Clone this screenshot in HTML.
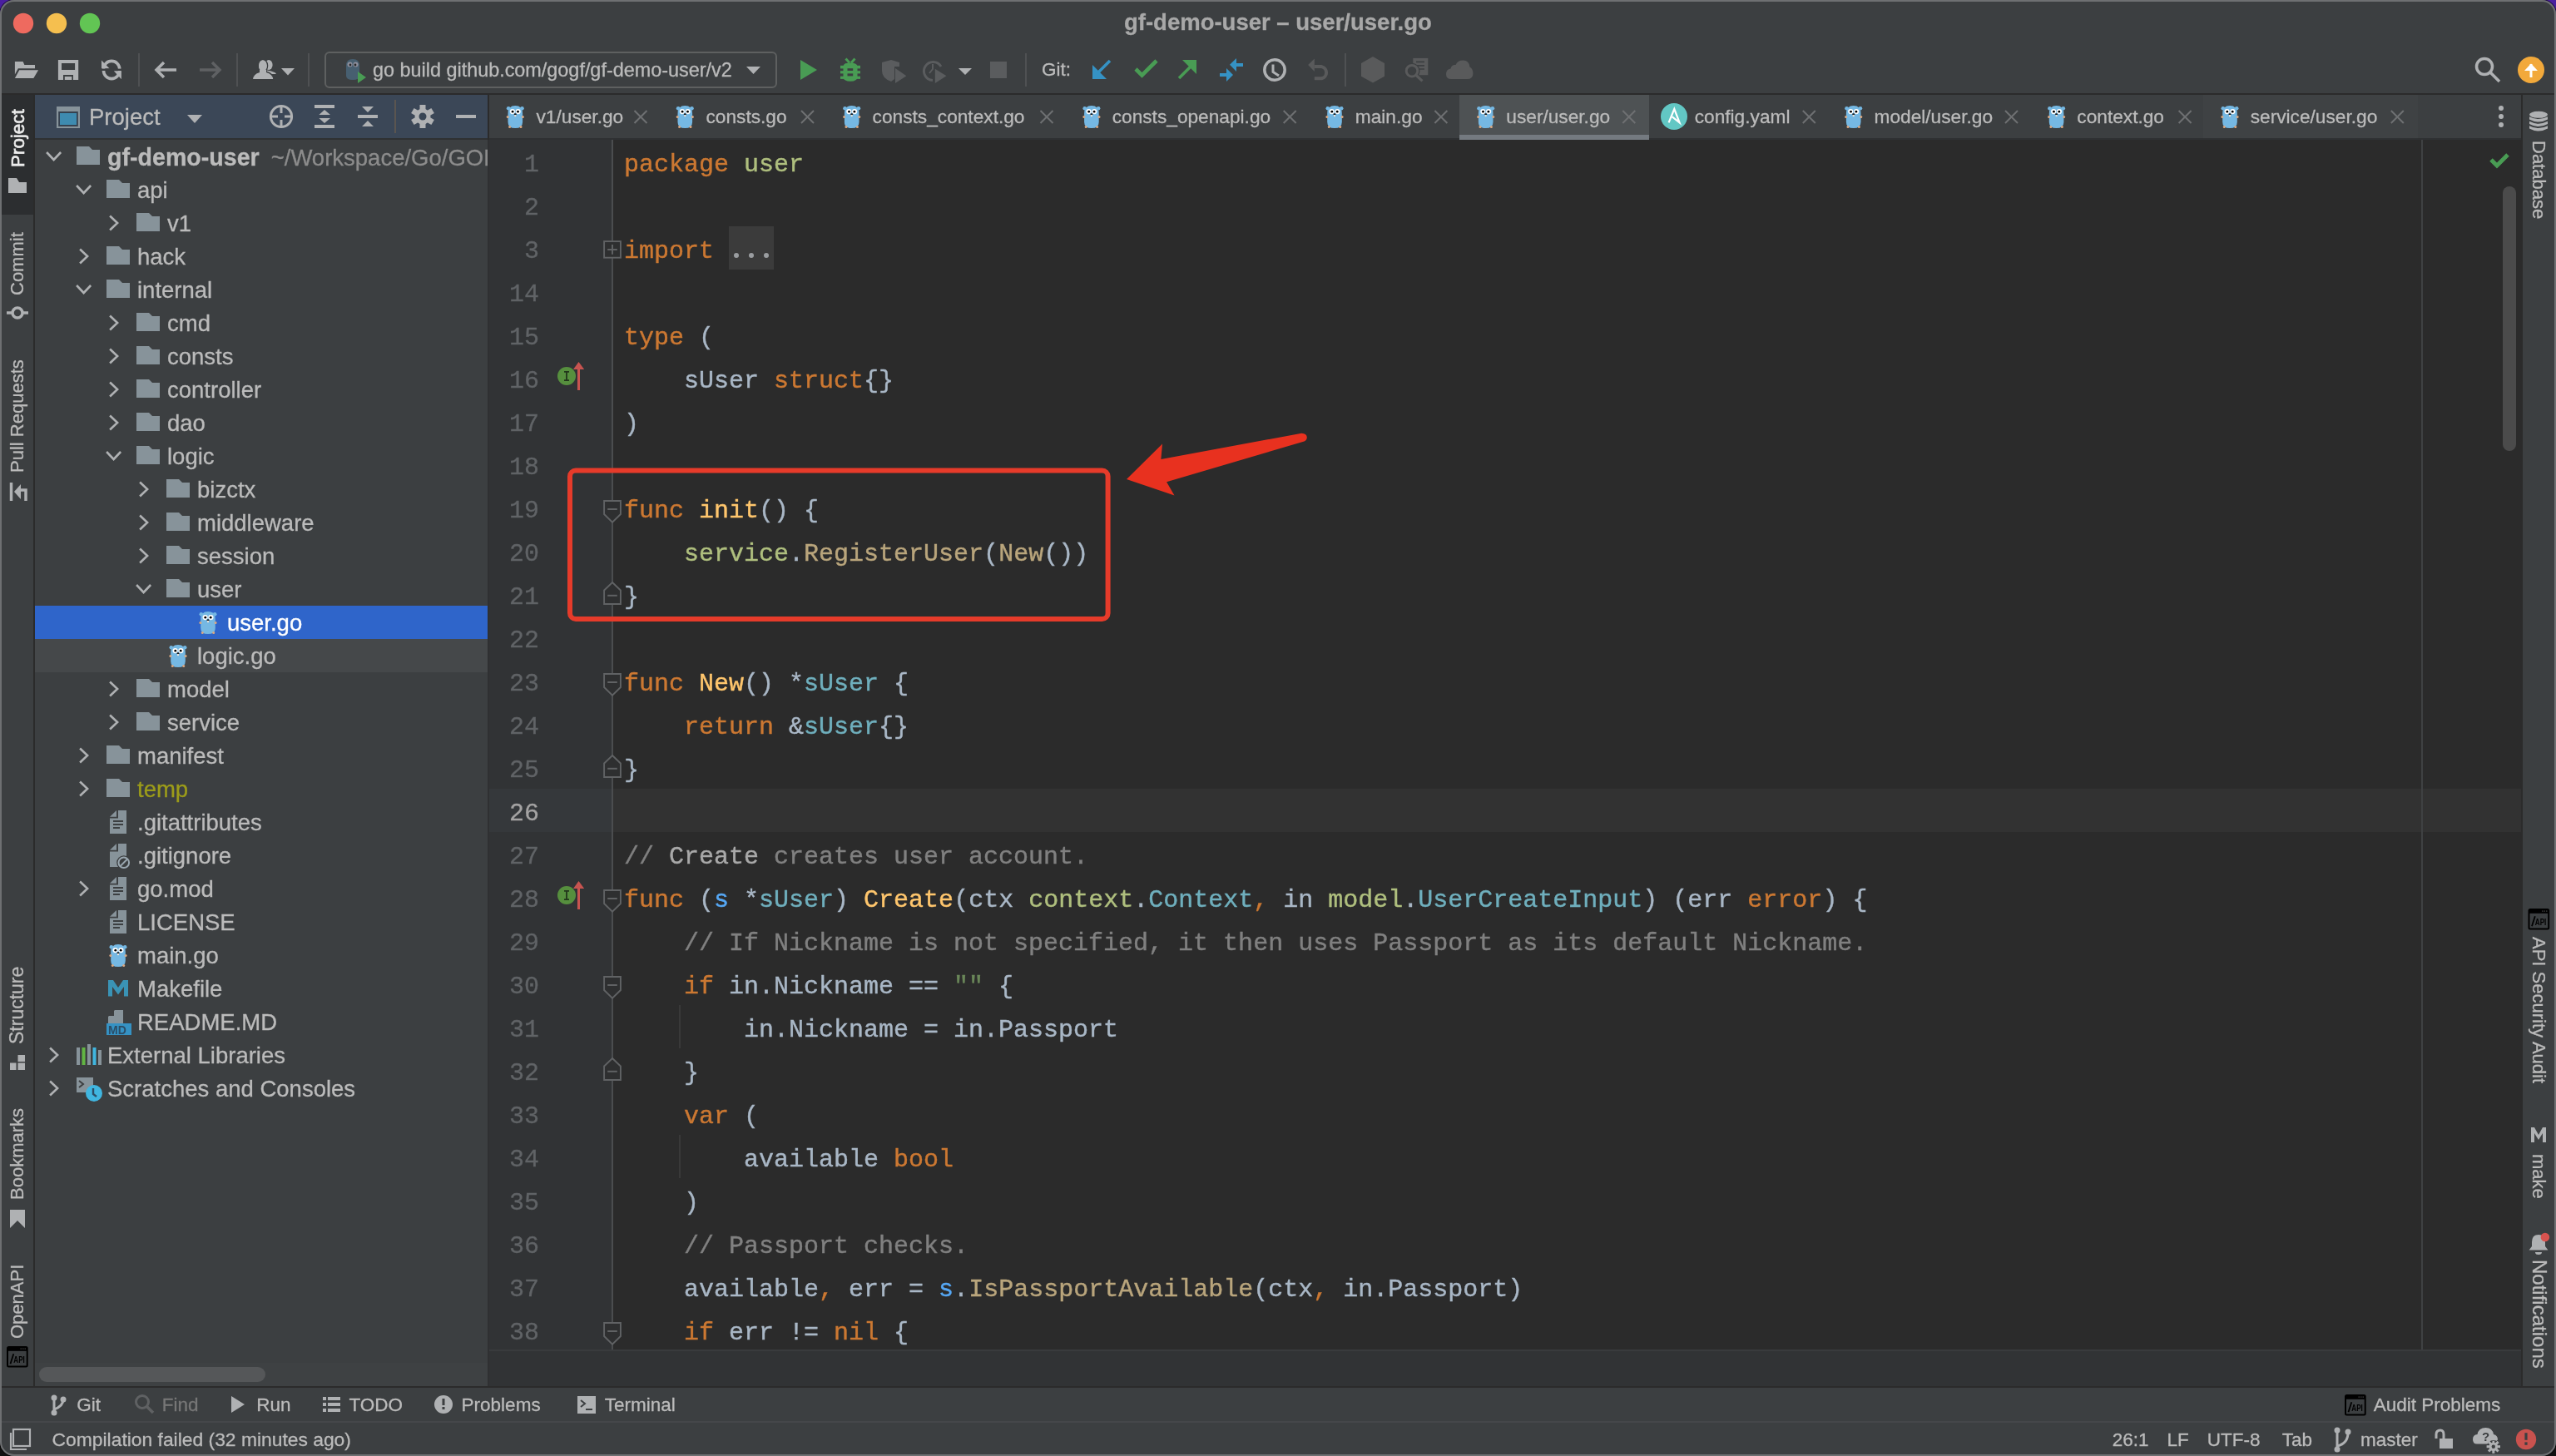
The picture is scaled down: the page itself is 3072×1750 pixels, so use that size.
<!DOCTYPE html>
<html><head><meta charset="utf-8">
<style>
*{margin:0;padding:0;box-sizing:border-box}
html,body{width:3072px;height:1750px;overflow:hidden}
body{position:relative;background:linear-gradient(#4a1fa0 0,#4a1fa0 50%,#111 50%,#111 100%);font-family:"Liberation Sans",sans-serif}
.a{position:absolute}
#win{position:absolute;left:0;top:0;width:3072px;height:1750px;border-radius:17px;background:#3c3f41;overflow:hidden;will-change:transform}
#frame{position:absolute;left:0;top:0;width:3072px;height:1750px;border-radius:17px;border:2px solid #6e7072;box-shadow:0 0 0 1px rgba(0,0,0,0.6)}
.ui{position:absolute;font-family:"Liberation Sans",sans-serif;color:#bbbbbb;white-space:nowrap;-webkit-text-stroke:0.3px currentColor}
.ln{position:absolute;left:588px;width:60px;-webkit-text-stroke:0.3px currentColor;text-align:right;font-family:"Liberation Mono",monospace;font-size:30px;line-height:52px;height:52px;color:#606366}
.cl{position:absolute;left:750px;-webkit-text-stroke:0.4px currentColor;font-family:"Liberation Mono",monospace;font-size:30px;line-height:52px;height:52px;color:#a9b7c6;white-space:pre}
.k{color:#cc7832}.f{color:#ffc66d}.c{color:#b9a57c}.p{color:#afbf7e}.t{color:#6fafbd}.r{color:#56a8f5}.cm{color:#808080}.s{color:#6a8759}.dr{color:#a9a9a9}
.tree{position:absolute;font-size:27.5px;line-height:40px;height:40px;color:#bbbbbb;white-space:nowrap;-webkit-text-stroke:0.3px currentColor}
.tab{position:absolute;font-size:22.5px;line-height:53px;color:#bbbbbb;white-space:nowrap}

</style></head><body>
<div id="win">
<!-- toolbar separator -->
<div class="a" style="left:0;top:112px;width:3072px;height:2px;background:#2b2b2b"></div>
<!-- left strip -->
<div class="a" style="left:0;top:114px;width:40px;height:1552px;background:#3c3f41"></div>
<div class="a" style="left:0;top:114px;width:40px;height:144px;background:#2c2e30"></div>
<div class="a" style="left:40px;top:114px;width:2px;height:1552px;background:#2b2b2b"></div>
<!-- project panel -->
<div class="a" style="left:42px;top:114px;width:544px;height:52px;background:#3b4757"></div>
<div class="a" style="left:42px;top:166px;width:544px;height:2px;background:#2f3133"></div>
<div class="a" style="left:586px;top:114px;width:2px;height:54px;background:#2b2b2b"></div>
<div class="a" style="left:586px;top:168px;width:2px;height:1498px;background:#2f3032"></div>
<div class="a" style="left:42px;top:1638px;width:544px;height:28px;background:#3e4143"></div>
<!-- tab bar -->
<div class="a" style="left:588px;top:114px;width:2442px;height:52px;background:#3c3f41"></div>
<div class="a" style="left:588px;top:166px;width:2442px;height:2px;background:#2f3133"></div>
<!-- editor -->
<div class="a" style="left:588px;top:168px;width:2442px;height:1454px;background:#2b2b2b"></div>
<div class="a" style="left:588px;top:168px;width:148px;height:1454px;background:#313335"></div>
<div class="a" style="left:588px;top:1622px;width:2442px;height:44px;background:#313335"></div>
<div class="a" style="left:588px;top:1622px;width:2442px;height:2px;background:#393b3d"></div>
<!-- right strip -->
<div class="a" style="left:3030px;top:114px;width:2px;height:1552px;background:#2b2b2b"></div>
<!-- bottom toolbar / status -->
<div class="a" style="left:0;top:1666px;width:3072px;height:2px;background:#2b2b2b"></div>
<div class="a" style="left:0;top:1708px;width:3072px;height:1.5px;background:#45474a"></div>

<div class="ui" style="left:1351px;top:10px;font-size:27.5px;line-height:34px;font-weight:bold;color:#a8a8a8">gf-demo-user &#8211; user/user.go</div>
<div class="ui" style="left:448px;top:66px;font-size:23.4px;line-height:36px;color:#bbbbbb">go build github.com/gogf/gf-demo-user/v2</div>
<div class="ui" style="left:1252px;top:66px;font-size:22.5px;line-height:36px;color:#bbbbbb">Git:</div><svg class="a" style="left:0;top:0" width="3072" height="112"><circle cx="28" cy="28" r="12.2" fill="#ee6a5f"/><circle cx="68" cy="28" r="12.2" fill="#f5bf4f"/><circle cx="108" cy="28" r="12.2" fill="#62c554"/><path d="M17.9,74 H27.6 L29.4,78 H42 V82.3 H21.8 L17.9,89.5 Z" fill="#afb1b3"/><path d="M23.2,84.3 H46.1 L40.3,94 H17.9 Z" fill="#afb1b3"/><path d="M69.9,72 H94.2 V96 H88 V89.9 H76 V96 H69.9 Z M74,76.1 V84 H90.1 V76.1 Z" fill="#afb1b3" fill-rule="evenodd"/><rect x="77.8" y="92" width="8.5" height="4" fill="#afb1b3"/><path d="M124.5,83 A9.6,9.6 0 0 1 143.7,83" fill="none" stroke="#afb1b3" stroke-width="3.6"/><path d="M143.7,85 A9.6,9.6 0 0 1 124.5,85" fill="none" stroke="#afb1b3" stroke-width="3.6"/><path d="M122,72.6 V82.2 H131.5 Z" fill="#afb1b3"/><path d="M145.9,85.2 V95.2 L136.8,85.2 Z" fill="#afb1b3"/><rect x="120" y="82.6" width="28" height="2.2" fill="#3c3f41"/><rect x="166" y="64" width="2" height="40" fill="#4f5153"/><rect x="284" y="64" width="2" height="40" fill="#4f5153"/><rect x="370" y="64" width="2" height="40" fill="#4f5153"/><rect x="1232" y="64" width="2" height="40" fill="#4f5153"/><rect x="1616" y="64" width="2" height="40" fill="#4f5153"/><path d="M188,84 H212 M197,75 L188,84 L197,93" fill="none" stroke="#afb1b3" stroke-width="3.5"/><path d="M240,84 H264 M255,75 L264,84 L255,93" fill="none" stroke="#5f6163" stroke-width="3.5"/><ellipse cx="323" cy="78" rx="4.6" ry="6" fill="#afb1b3"/><path d="M320,84.5 Q331.5,86 331.9,89 H324 Z" fill="#afb1b3"/><g fill="#afb1b3" stroke="#3c3f41" stroke-width="1.6"><ellipse cx="315.9" cy="79" rx="5.6" ry="7.3"/><path d="M303.2,95.8 Q303.5,88.5 312,86.3 H320 Q328.5,88.5 329.2,95.8 Z"/></g><ellipse cx="315.9" cy="79" rx="4.9" ry="6.7" fill="#afb1b3"/><rect x="312" y="84" width="8" height="4" fill="#afb1b3"/><path d="M338,82 H354 L346,90.5 Z" fill="#afb1b3"/><rect x="391" y="63" width="542" height="42" rx="5" fill="none" stroke="#5e6060" stroke-width="2"/><g transform="translate(414,70)" opacity="0.75"><path d="M2,9 Q2,1 10,1 Q18,1 18,9 V21 Q18,26 10,26 Q2,26 2,21 Z" fill="#4b6a80"/><circle cx="6.5" cy="7.5" r="3" fill="#aab"/><circle cx="13.5" cy="7.5" r="3" fill="#aab"/><circle cx="7" cy="8" r="1.4" fill="#222"/><circle cx="13" cy="8" r="1.4" fill="#222"/></g><path d="M430,86 L440,93 L430,100 Z" fill="#499c54"/><path d="M897,80 H914 L905.5,89 Z" fill="#afb1b3"/><path d="M962,72 L982,84 L962,96 Z" fill="#499c54"/><g fill="#499c54"><path d="M1013.5,80 Q1013.5,75.5 1022,75.5 Q1030.5,75.5 1030.5,80 V92 Q1030.5,97.8 1022,97.8 Q1013.5,97.8 1013.5,92 Z"/><rect x="1010" y="78.8" width="24" height="3.6"/><rect x="1010" y="85.2" width="24" height="3.2"/><rect x="1010" y="91.7" width="24" height="3.2"/></g><rect x="1018.5" y="82.2" width="6.7" height="2.8" fill="#3c3f41"/><rect x="1018.5" y="88.4" width="6.7" height="3" fill="#3c3f41"/><path d="M1016.5,70.5 L1021,75.5 M1027.5,70.5 L1023,75.5" stroke="#499c54" stroke-width="2.8"/><path d="M1060,75 L1071,72 L1081,75 V80 H1075 V95 L1071,98 Q1060,94 1060,85 Z" fill="#5a5c5e"/><path d="M1076,82 L1089.4,91.2 L1076,100 Z" fill="#5a5c5e"/><path d="M1121,96.5 A11,11 0 1 1 1131,80" fill="none" stroke="#5a5c5e" stroke-width="3"/><path d="M1121,77 V83 L1117,88" fill="none" stroke="#5a5c5e" stroke-width="2"/><path d="M1123.8,82.7 L1137.5,91.2 L1123.8,100 Z" fill="#5a5c5e"/><path d="M1152,82 H1168 L1160,90 Z" fill="#afb1b3"/><rect x="1190" y="74" width="20" height="20" fill="#5a5c5e"/><path d="M1334,73 L1317,90" stroke="#3592c4" stroke-width="3.5"/><path d="M1313,78 V95 H1330 Z" fill="#3592c4"/><path d="M1365,83 L1372.5,90.5 L1390,73" fill="none" stroke="#499c54" stroke-width="4.6"/><path d="M1417,94 L1434,77" stroke="#499c54" stroke-width="3.5"/><path d="M1421,72 H1438 V89 Z" fill="#499c54"/><path d="M1478,77.8 L1486,69.9 V86 Z M1486,76 H1494 V80 H1486 Z M1482,90 L1474,81.9 V98 Z M1466,88 H1474 V92 H1466 Z" fill="#3592c4"/><circle cx="1532" cy="84" r="12.2" fill="none" stroke="#afb1b3" stroke-width="3.5"/><path d="M1530,77.5 V86.5 L1537,91" fill="none" stroke="#afb1b3" stroke-width="3"/><path d="M1579.8,80.1 H1588.5 A7.3,7.3 0 0 1 1588.5,94.3 H1579.8" fill="none" stroke="#595a5b" stroke-width="4"/><path d="M1572.2,78 L1579.8,70.4 V86.1 Z" fill="#595a5b"/><path d="M1650,68.1 L1664,76 V91.7 L1650,99.6 L1636,91.7 V76 Z" fill="#595a5b"/><rect x="1698.3" y="69.9" width="18" height="20.3" fill="#595a5b"/><path d="M1702,74.4 H1712 M1702,78.9 H1712 M1702,83 H1712" stroke="#3c3f41" stroke-width="1.6"/><circle cx="1697" cy="85.2" r="9.5" fill="#3c3f41"/><circle cx="1697" cy="85.2" r="6.8" fill="none" stroke="#595a5b" stroke-width="3"/><path d="M1701.5,90 L1709.5,97.4" stroke="#595a5b" stroke-width="3.2"/><path d="M1744,95.1 Q1738,95.1 1738,89 Q1738,83.5 1743.5,82.6 Q1744.5,77.5 1749.5,78 Q1752,72.6 1758.5,72.6 Q1765.5,72.6 1766.5,80.5 Q1770.4,82.5 1770.4,88.5 Q1770.4,95.1 1763.5,95.1 Z" fill="#595a5b"/><circle cx="2986" cy="80" r="9.5" fill="none" stroke="#afb1b3" stroke-width="3.5"/><path d="M2993,87 L3004,98" stroke="#afb1b3" stroke-width="3.5"/><circle cx="3042" cy="84" r="16" fill="#f2a93b"/><path d="M3042,77 V93" stroke="#fff" stroke-width="3"/><path d="M3034,85 L3042,76.5 L3050,85 Z" fill="#fff"/></svg>
<div class="ui" style="left:8.7px;top:200.5px;font-size:22.4px;line-height:25.02px;height:25.02px;transform-origin:0 0;transform:rotate(-90deg);color:#ececec;"><span style="-webkit-text-stroke:0.7px #ececec">Project</span></div>
<div class="ui" style="left:9.1px;top:355.0px;font-size:22px;line-height:24.57px;height:24.57px;transform-origin:0 0;transform:rotate(-90deg);color:#bbbbbb;">Commit</div>
<div class="ui" style="left:9.1px;top:568.4px;font-size:22px;line-height:24.57px;height:24.57px;transform-origin:0 0;transform:rotate(-90deg);color:#bbbbbb;">Pull Requests</div>
<div class="ui" style="left:8.2px;top:1255.4px;font-size:23px;line-height:25.69px;height:25.69px;transform-origin:0 0;transform:rotate(-90deg);color:#bbbbbb;">Structure</div>
<div class="ui" style="left:9.1px;top:1442.0px;font-size:22px;line-height:24.57px;height:24.57px;transform-origin:0 0;transform:rotate(-90deg);color:#bbbbbb;">Bookmarks</div>
<div class="ui" style="left:9.1px;top:1609.4px;font-size:22px;line-height:24.57px;height:24.57px;transform-origin:0 0;transform:rotate(-90deg);color:#bbbbbb;">OpenAPI</div><svg class="a" style="left:0;top:0" width="42" height="1666"><path d="M10,214 H20 L23,219 H32 V232 H10 Z" fill="#afb1b3"/><circle cx="21" cy="376" r="6" fill="none" stroke="#afb1b3" stroke-width="3.5"/><path d="M8,376 H14.5 M27.5,376 H34" stroke="#afb1b3" stroke-width="3.5"/><path d="M13.5,580 V602" stroke="#afb1b3" stroke-width="3.5"/><path d="M17,591 L25,582 V600 Z" fill="#afb1b3"/><path d="M24,589 H31 V602" fill="none" stroke="#afb1b3" stroke-width="3.5"/><rect x="21.5" y="1268" width="8.5" height="8" fill="#afb1b3"/><rect x="12" y="1277.5" width="7.5" height="8.5" fill="#afb1b3"/><rect x="21.5" y="1277.5" width="8.5" height="8.5" fill="#afb1b3"/><path d="M12,1454 H30 V1476 L21,1467 L12,1476 Z" fill="#afb1b3"/><g transform="translate(8,1618)"><rect x="0" y="0" width="25.7" height="25.6" rx="2.5" fill="#000"/><rect x="2" y="5.8" width="21.7" height="17.7" fill="#3c3f41"/><rect x="16.5" y="2.4" width="1.5" height="1.4" fill="#3a3a3a"/><rect x="19" y="2.4" width="1.5" height="1.4" fill="#3a3a3a"/><rect x="21.5" y="2.4" width="1.5" height="1.4" fill="#3a3a3a"/><path d="M4.5,21.3 L8.3,9.3" stroke="#000" stroke-width="1.8"/><text x="8.3" y="19.8" font-family="Liberation Sans" font-weight="bold" font-size="11.5" fill="#000" textLength="13.5" lengthAdjust="spacingAndGlyphs">API</text></g></svg>
<div class="a" style="left:0;top:0;width:586px;height:1666px;overflow:hidden;clip-path:inset(114px 0 0 42px)"><div class="ui" style="left:107px;top:114px;font-size:27.5px;line-height:53px;color:#bbbbbb">Project</div>
<div class="tree" style="left:129px;top:169px;color:#bbbbbb"><b style="font-size:28.6px">gf-demo-user</b><span style="color:#8c8c8c;margin-left:14px">~/Workspace/Go/GOPATH/src</span></div>
<div class="tree" style="left:165px;top:209px;color:#bbbbbb">api</div>
<div class="tree" style="left:201px;top:249px;color:#bbbbbb">v1</div>
<div class="tree" style="left:165px;top:289px;color:#bbbbbb">hack</div>
<div class="tree" style="left:165px;top:329px;color:#bbbbbb">internal</div>
<div class="tree" style="left:201px;top:369px;color:#bbbbbb">cmd</div>
<div class="tree" style="left:201px;top:409px;color:#bbbbbb">consts</div>
<div class="tree" style="left:201px;top:449px;color:#bbbbbb">controller</div>
<div class="tree" style="left:201px;top:489px;color:#bbbbbb">dao</div>
<div class="tree" style="left:201px;top:529px;color:#bbbbbb">logic</div>
<div class="tree" style="left:237px;top:569px;color:#bbbbbb">bizctx</div>
<div class="tree" style="left:237px;top:609px;color:#bbbbbb">middleware</div>
<div class="tree" style="left:237px;top:649px;color:#bbbbbb">session</div>
<div class="tree" style="left:237px;top:689px;color:#bbbbbb">user</div>
<div class="a" style="left:41px;top:728px;width:545px;height:40px;background:#2f65ca"></div>
<div class="tree" style="left:273px;top:729px;color:#ffffff">user.go</div>
<div class="a" style="left:41px;top:768px;width:545px;height:40px;background:#45484a"></div>
<div class="tree" style="left:237px;top:769px;color:#bbbbbb">logic.go</div>
<div class="tree" style="left:201px;top:809px;color:#bbbbbb">model</div>
<div class="tree" style="left:201px;top:849px;color:#bbbbbb">service</div>
<div class="tree" style="left:165px;top:889px;color:#bbbbbb">manifest</div>
<div class="tree" style="left:165px;top:929px;color:#9c9c1a">temp</div>
<div class="tree" style="left:165px;top:969px;color:#bbbbbb">.gitattributes</div>
<div class="tree" style="left:165px;top:1009px;color:#bbbbbb">.gitignore</div>
<div class="tree" style="left:165px;top:1049px;color:#bbbbbb">go.mod</div>
<div class="tree" style="left:165px;top:1089px;color:#bbbbbb">LICENSE</div>
<div class="tree" style="left:165px;top:1129px;color:#bbbbbb">main.go</div>
<div class="tree" style="left:165px;top:1169px;color:#bbbbbb">Makefile</div>
<div class="tree" style="left:165px;top:1209px;color:#bbbbbb">README.MD</div>
<div class="tree" style="left:129px;top:1249px;color:#bbbbbb">External Libraries</div>
<div class="tree" style="left:129px;top:1289px;color:#bbbbbb">Scratches and Consoles</div>
<div class="a" style="left:47px;top:1643px;width:272px;height:18px;border-radius:9px;background:#555759"></div><svg class="a" style="left:0;top:0" width="600" height="1700"><rect x="68" y="128" width="28" height="26" fill="#87939a"/><rect x="70.2" y="134" width="23.6" height="18" fill="#36414f"/><rect x="72" y="136" width="20" height="14" fill="#3e8bb0"/><path d="M225,138 H243 L234,148 Z" fill="#afb1b3"/><circle cx="338" cy="140" r="12.6" fill="none" stroke="#afb1b3" stroke-width="3"/><path d="M338,127 V136 M338,144 V153 M325,140 H334 M342,140 H351" stroke="#afb1b3" stroke-width="3"/><rect x="378" y="126" width="24" height="4" fill="#afb1b3"/><rect x="378" y="150" width="24" height="4" fill="#afb1b3"/><path d="M383.4,138 L390,132 L397,138 Z M383.4,142 L397,142 L390,148 Z" fill="#afb1b3"/><rect x="430" y="138" width="24" height="4" fill="#afb1b3"/><path d="M435,128 H449 L442,135 Z M442,145 L449,152 H435 Z" fill="#afb1b3"/><rect x="474" y="120" width="2" height="40" fill="#5a5550"/><rect x="504.5" y="126" width="7" height="8" fill="#afb1b3" transform="rotate(0 508 140)"/><rect x="504.5" y="126" width="7" height="8" fill="#afb1b3" transform="rotate(60 508 140)"/><rect x="504.5" y="126" width="7" height="8" fill="#afb1b3" transform="rotate(120 508 140)"/><rect x="504.5" y="126" width="7" height="8" fill="#afb1b3" transform="rotate(180 508 140)"/><rect x="504.5" y="126" width="7" height="8" fill="#afb1b3" transform="rotate(240 508 140)"/><rect x="504.5" y="126" width="7" height="8" fill="#afb1b3" transform="rotate(300 508 140)"/><circle cx="508" cy="140" r="9.5" fill="#afb1b3"/><circle cx="508" cy="140" r="4.5" fill="#394655"/><rect x="548" y="138" width="24" height="4" fill="#afb1b3"/><path d="M56.1,183.0 L64.6,192.0 L73.1,183.0" fill="none" stroke="#afb1b3" stroke-width="2.6"/><path d="M92,176 H107 L111,180 H120 V198 H92 Z" fill="#87939a"/><path d="M92.1,223.0 L100.6,232.0 L109.1,223.0" fill="none" stroke="#afb1b3" stroke-width="2.6"/><path d="M128,216 H143 L147,220 H156 V238 H128 Z" fill="#87939a"/><path d="M132.1,259.5 L141.1,268.0 L132.1,276.5" fill="none" stroke="#afb1b3" stroke-width="2.6"/><path d="M164,256 H179 L183,260 H192 V278 H164 Z" fill="#87939a"/><path d="M96.1,299.5 L105.1,308.0 L96.1,316.5" fill="none" stroke="#afb1b3" stroke-width="2.6"/><path d="M128,296 H143 L147,300 H156 V318 H128 Z" fill="#87939a"/><path d="M92.1,343.0 L100.6,352.0 L109.1,343.0" fill="none" stroke="#afb1b3" stroke-width="2.6"/><path d="M128,336 H143 L147,340 H156 V358 H128 Z" fill="#87939a"/><path d="M132.1,379.5 L141.1,388.0 L132.1,396.5" fill="none" stroke="#afb1b3" stroke-width="2.6"/><path d="M164,376 H179 L183,380 H192 V398 H164 Z" fill="#87939a"/><path d="M132.1,419.5 L141.1,428.0 L132.1,436.5" fill="none" stroke="#afb1b3" stroke-width="2.6"/><path d="M164,416 H179 L183,420 H192 V438 H164 Z" fill="#87939a"/><path d="M132.1,459.5 L141.1,468.0 L132.1,476.5" fill="none" stroke="#afb1b3" stroke-width="2.6"/><path d="M164,456 H179 L183,460 H192 V478 H164 Z" fill="#87939a"/><path d="M132.1,499.5 L141.1,508.0 L132.1,516.5" fill="none" stroke="#afb1b3" stroke-width="2.6"/><path d="M164,496 H179 L183,500 H192 V518 H164 Z" fill="#87939a"/><path d="M128.1,543.0 L136.6,552.0 L145.1,543.0" fill="none" stroke="#afb1b3" stroke-width="2.6"/><path d="M164,536 H179 L183,540 H192 V558 H164 Z" fill="#87939a"/><path d="M168.1,579.5 L177.1,588.0 L168.1,596.5" fill="none" stroke="#afb1b3" stroke-width="2.6"/><path d="M200,576 H215 L219,580 H228 V598 H200 Z" fill="#87939a"/><path d="M168.1,619.5 L177.1,628.0 L168.1,636.5" fill="none" stroke="#afb1b3" stroke-width="2.6"/><path d="M200,616 H215 L219,620 H228 V638 H200 Z" fill="#87939a"/><path d="M168.1,659.5 L177.1,668.0 L168.1,676.5" fill="none" stroke="#afb1b3" stroke-width="2.6"/><path d="M200,656 H215 L219,660 H228 V678 H200 Z" fill="#87939a"/><path d="M164.1,703.0 L172.6,712.0 L181.1,703.0" fill="none" stroke="#afb1b3" stroke-width="2.6"/><path d="M200,696 H215 L219,700 H228 V718 H200 Z" fill="#87939a"/><g transform="translate(240,733.7)"><circle cx="1.8" cy="4.6" r="2.3" fill="#75b8e3"/><circle cx="18.2" cy="4.6" r="2.3" fill="#75b8e3"/><path d="M1.2,11 Q1.2,1.2 10,1.2 Q18.8,1.2 18.8,11 V21 Q18.8,28.4 10,28.4 Q1.2,28.4 1.2,21 Z" fill="#75b8e3"/><circle cx="6.6" cy="8.4" r="3.1" fill="#fff"/><circle cx="13.4" cy="8.4" r="3.1" fill="#fff"/><circle cx="6.8" cy="8.5" r="1.4" fill="#000"/><circle cx="13.2" cy="8.5" r="1.4" fill="#000"/><ellipse cx="10" cy="11.6" rx="1.6" ry="1.1" fill="#1a1a1a"/><rect x="9" y="12.4" width="2" height="2" fill="#f0e6dc"/><circle cx="0.9" cy="14.8" r="1.5" fill="#d9a883"/><circle cx="19.1" cy="14.8" r="1.5" fill="#d9a883"/><circle cx="3.3" cy="26.8" r="1.5" fill="#d9a883"/><circle cx="16.7" cy="26.8" r="1.5" fill="#d9a883"/></g><g transform="translate(204,773.7)"><circle cx="1.8" cy="4.6" r="2.3" fill="#75b8e3"/><circle cx="18.2" cy="4.6" r="2.3" fill="#75b8e3"/><path d="M1.2,11 Q1.2,1.2 10,1.2 Q18.8,1.2 18.8,11 V21 Q18.8,28.4 10,28.4 Q1.2,28.4 1.2,21 Z" fill="#75b8e3"/><circle cx="6.6" cy="8.4" r="3.1" fill="#fff"/><circle cx="13.4" cy="8.4" r="3.1" fill="#fff"/><circle cx="6.8" cy="8.5" r="1.4" fill="#000"/><circle cx="13.2" cy="8.5" r="1.4" fill="#000"/><ellipse cx="10" cy="11.6" rx="1.6" ry="1.1" fill="#1a1a1a"/><rect x="9" y="12.4" width="2" height="2" fill="#f0e6dc"/><circle cx="0.9" cy="14.8" r="1.5" fill="#d9a883"/><circle cx="19.1" cy="14.8" r="1.5" fill="#d9a883"/><circle cx="3.3" cy="26.8" r="1.5" fill="#d9a883"/><circle cx="16.7" cy="26.8" r="1.5" fill="#d9a883"/></g><path d="M132.1,819.5 L141.1,828.0 L132.1,836.5" fill="none" stroke="#afb1b3" stroke-width="2.6"/><path d="M164,816 H179 L183,820 H192 V838 H164 Z" fill="#87939a"/><path d="M132.1,859.5 L141.1,868.0 L132.1,876.5" fill="none" stroke="#afb1b3" stroke-width="2.6"/><path d="M164,856 H179 L183,860 H192 V878 H164 Z" fill="#87939a"/><path d="M96.1,899.5 L105.1,908.0 L96.1,916.5" fill="none" stroke="#afb1b3" stroke-width="2.6"/><path d="M128,896 H143 L147,900 H156 V918 H128 Z" fill="#87939a"/><path d="M96.1,939.5 L105.1,948.0 L96.1,956.5" fill="none" stroke="#afb1b3" stroke-width="2.6"/><path d="M128,936 H143 L147,940 H156 V958 H128 Z" fill="#87939a"/><path d="M142.0,974.0 H152.0 V1002.0 H132.0 V983.5 H142.0 Z" fill="#87939a"/><path d="M132.0,981.8 L140.0,974.0 V981.8 Z" fill="#87939a"/><rect x="136.0" y="986.0" width="12" height="2" fill="#3c3f41"/><rect x="136.0" y="990.0" width="12" height="2" fill="#3c3f41"/><rect x="136.0" y="994.0" width="8" height="2" fill="#3c3f41"/><path d="M142.0,1014.0 H152.0 V1042.0 H132.0 V1023.5 H142.0 Z" fill="#87939a"/><path d="M132.0,1021.8 L140.0,1014.0 V1021.8 Z" fill="#87939a"/><circle cx="148.8" cy="1036.8" r="8.6" fill="#3c3f41"/><circle cx="148.8" cy="1036.8" r="6.3" fill="none" stroke="#9aa7b0" stroke-width="2"/><path d="M144.5,1041.1 L153.1,1032.5" stroke="#9aa7b0" stroke-width="2"/><path d="M96.1,1059.5 L105.1,1068.0 L96.1,1076.5" fill="none" stroke="#afb1b3" stroke-width="2.6"/><path d="M142.0,1054.0 H152.0 V1082.0 H132.0 V1063.5 H142.0 Z" fill="#87939a"/><path d="M132.0,1061.8 L140.0,1054.0 V1061.8 Z" fill="#87939a"/><rect x="136.0" y="1066.0" width="12" height="2" fill="#3c3f41"/><rect x="136.0" y="1070.0" width="12" height="2" fill="#3c3f41"/><rect x="136.0" y="1074.0" width="8" height="2" fill="#3c3f41"/><path d="M142.0,1094.0 H152.0 V1122.0 H132.0 V1103.5 H142.0 Z" fill="#87939a"/><path d="M132.0,1101.8 L140.0,1094.0 V1101.8 Z" fill="#87939a"/><rect x="136.0" y="1106.0" width="12" height="2" fill="#3c3f41"/><rect x="136.0" y="1110.0" width="12" height="2" fill="#3c3f41"/><rect x="136.0" y="1114.0" width="8" height="2" fill="#3c3f41"/><g transform="translate(132,1133.7)"><circle cx="1.8" cy="4.6" r="2.3" fill="#75b8e3"/><circle cx="18.2" cy="4.6" r="2.3" fill="#75b8e3"/><path d="M1.2,11 Q1.2,1.2 10,1.2 Q18.8,1.2 18.8,11 V21 Q18.8,28.4 10,28.4 Q1.2,28.4 1.2,21 Z" fill="#75b8e3"/><circle cx="6.6" cy="8.4" r="3.1" fill="#fff"/><circle cx="13.4" cy="8.4" r="3.1" fill="#fff"/><circle cx="6.8" cy="8.5" r="1.4" fill="#000"/><circle cx="13.2" cy="8.5" r="1.4" fill="#000"/><ellipse cx="10" cy="11.6" rx="1.6" ry="1.1" fill="#1a1a1a"/><rect x="9" y="12.4" width="2" height="2" fill="#f0e6dc"/><circle cx="0.9" cy="14.8" r="1.5" fill="#d9a883"/><circle cx="19.1" cy="14.8" r="1.5" fill="#d9a883"/><circle cx="3.3" cy="26.8" r="1.5" fill="#d9a883"/><circle cx="16.7" cy="26.8" r="1.5" fill="#d9a883"/></g><path d="M130.0,1197.5 V1178.0 H136.0 L142.0,1187.0 L148.0,1178.0 H154.0 V1197.5 H149.0 V1186.0 L142.0,1195.5 L135.0,1186.0 V1197.5 Z" fill="#3a93b5"/><g transform="translate(128,1214)"><path d="M10,0 H20 V16 H2 V8 Z" fill="#87939a"/><path d="M2,7 L9,0 V7 Z" fill="#3c3f41"/><rect x="0" y="16" width="30" height="14" fill="#3592c4"/><text x="2" y="28.5" font-family="Liberation Sans" font-weight="bold" font-size="14" fill="#2b4d66">MD</text></g><path d="M60.1,1259.5 L69.1,1268.0 L60.1,1276.5" fill="none" stroke="#afb1b3" stroke-width="2.6"/><g transform="translate(92,1255)"><rect x="0" y="4" width="4" height="21" fill="#87939a"/><rect x="6.5" y="4" width="4" height="21" fill="#62b543"/><rect x="13" y="0" width="4" height="25" fill="#87939a"/><rect x="19.5" y="4" width="4" height="21" fill="#40b6e0"/><rect x="26" y="7" width="4" height="18" fill="#87939a"/></g><path d="M60.1,1299.5 L69.1,1308.0 L60.1,1316.5" fill="none" stroke="#afb1b3" stroke-width="2.6"/><g transform="translate(92,1295)"><rect x="0" y="0" width="20" height="18" fill="#87939a"/><path d="M3,4 L8,8 L3,12" fill="none" stroke="#3c3f41" stroke-width="2"/><circle cx="21" cy="19" r="10" fill="#40b6e0"/><path d="M20,13 V20 L24,23" fill="none" stroke="#2b4d66" stroke-width="2.4"/></g></svg></div>
<div class="a" style="left:1754px;top:114px;width:228px;height:52px;background:#4e5254"></div>
<div class="a" style="left:1754px;top:162px;width:228px;height:6px;background:#747a80"></div>
<div class="a" style="left:2648px;top:114px;width:258px;height:52px;background:#3f4244"></div>
<div class="ui" style="left:644.5px;top:114px;font-size:22.7px;line-height:53px;height:53px;color:#bbbbbb">v1/user.go</div>
<div class="ui" style="left:848.5px;top:114px;font-size:22.7px;line-height:53px;height:53px;color:#bbbbbb">consts.go</div>
<div class="ui" style="left:1048.6px;top:114px;font-size:22.7px;line-height:53px;height:53px;color:#bbbbbb">consts_context.go</div>
<div class="ui" style="left:1336.7px;top:114px;font-size:22.7px;line-height:53px;height:53px;color:#bbbbbb">consts_openapi.go</div>
<div class="ui" style="left:1628.8px;top:114px;font-size:22.7px;line-height:53px;height:53px;color:#bbbbbb">main.go</div>
<div class="ui" style="left:1810.3px;top:114px;font-size:22.7px;line-height:53px;height:53px;color:#bbbbbb">user/user.go</div>
<div class="ui" style="left:2036.7px;top:114px;font-size:22.7px;line-height:53px;height:53px;color:#bbbbbb">config.yaml</div>
<div class="ui" style="left:2252.5px;top:114px;font-size:22.7px;line-height:53px;height:53px;color:#bbbbbb">model/user.go</div>
<div class="ui" style="left:2496.3px;top:114px;font-size:22.7px;line-height:53px;height:53px;color:#bbbbbb">context.go</div>
<div class="ui" style="left:2704.7px;top:114px;font-size:22.7px;line-height:53px;height:53px;color:#bbbbbb">service/user.go</div><svg class="a" style="left:0;top:0" width="3072" height="170"><g transform="translate(609.3,125.7)"><circle cx="1.8" cy="4.6" r="2.3" fill="#75b8e3"/><circle cx="18.2" cy="4.6" r="2.3" fill="#75b8e3"/><path d="M1.2,11 Q1.2,1.2 10,1.2 Q18.8,1.2 18.8,11 V21 Q18.8,28.4 10,28.4 Q1.2,28.4 1.2,21 Z" fill="#75b8e3"/><circle cx="6.6" cy="8.4" r="3.1" fill="#fff"/><circle cx="13.4" cy="8.4" r="3.1" fill="#fff"/><circle cx="6.8" cy="8.5" r="1.4" fill="#000"/><circle cx="13.2" cy="8.5" r="1.4" fill="#000"/><ellipse cx="10" cy="11.6" rx="1.6" ry="1.1" fill="#1a1a1a"/><rect x="9" y="12.4" width="2" height="2" fill="#f0e6dc"/><circle cx="0.9" cy="14.8" r="1.5" fill="#d9a883"/><circle cx="19.1" cy="14.8" r="1.5" fill="#d9a883"/><circle cx="3.3" cy="26.8" r="1.5" fill="#d9a883"/><circle cx="16.7" cy="26.8" r="1.5" fill="#d9a883"/></g><path d="M762.5,133 L777.5,148 M777.5,133 L762.5,148" stroke="#6e7072" stroke-width="2"/><g transform="translate(813.3,125.7)"><circle cx="1.8" cy="4.6" r="2.3" fill="#75b8e3"/><circle cx="18.2" cy="4.6" r="2.3" fill="#75b8e3"/><path d="M1.2,11 Q1.2,1.2 10,1.2 Q18.8,1.2 18.8,11 V21 Q18.8,28.4 10,28.4 Q1.2,28.4 1.2,21 Z" fill="#75b8e3"/><circle cx="6.6" cy="8.4" r="3.1" fill="#fff"/><circle cx="13.4" cy="8.4" r="3.1" fill="#fff"/><circle cx="6.8" cy="8.5" r="1.4" fill="#000"/><circle cx="13.2" cy="8.5" r="1.4" fill="#000"/><ellipse cx="10" cy="11.6" rx="1.6" ry="1.1" fill="#1a1a1a"/><rect x="9" y="12.4" width="2" height="2" fill="#f0e6dc"/><circle cx="0.9" cy="14.8" r="1.5" fill="#d9a883"/><circle cx="19.1" cy="14.8" r="1.5" fill="#d9a883"/><circle cx="3.3" cy="26.8" r="1.5" fill="#d9a883"/><circle cx="16.7" cy="26.8" r="1.5" fill="#d9a883"/></g><path d="M963.0,133 L978.0,148 M978.0,133 L963.0,148" stroke="#6e7072" stroke-width="2"/><g transform="translate(1013.7,125.7)"><circle cx="1.8" cy="4.6" r="2.3" fill="#75b8e3"/><circle cx="18.2" cy="4.6" r="2.3" fill="#75b8e3"/><path d="M1.2,11 Q1.2,1.2 10,1.2 Q18.8,1.2 18.8,11 V21 Q18.8,28.4 10,28.4 Q1.2,28.4 1.2,21 Z" fill="#75b8e3"/><circle cx="6.6" cy="8.4" r="3.1" fill="#fff"/><circle cx="13.4" cy="8.4" r="3.1" fill="#fff"/><circle cx="6.8" cy="8.5" r="1.4" fill="#000"/><circle cx="13.2" cy="8.5" r="1.4" fill="#000"/><ellipse cx="10" cy="11.6" rx="1.6" ry="1.1" fill="#1a1a1a"/><rect x="9" y="12.4" width="2" height="2" fill="#f0e6dc"/><circle cx="0.9" cy="14.8" r="1.5" fill="#d9a883"/><circle cx="19.1" cy="14.8" r="1.5" fill="#d9a883"/><circle cx="3.3" cy="26.8" r="1.5" fill="#d9a883"/><circle cx="16.7" cy="26.8" r="1.5" fill="#d9a883"/></g><path d="M1250.5,133 L1265.5,148 M1265.5,133 L1250.5,148" stroke="#6e7072" stroke-width="2"/><g transform="translate(1301.9,125.7)"><circle cx="1.8" cy="4.6" r="2.3" fill="#75b8e3"/><circle cx="18.2" cy="4.6" r="2.3" fill="#75b8e3"/><path d="M1.2,11 Q1.2,1.2 10,1.2 Q18.8,1.2 18.8,11 V21 Q18.8,28.4 10,28.4 Q1.2,28.4 1.2,21 Z" fill="#75b8e3"/><circle cx="6.6" cy="8.4" r="3.1" fill="#fff"/><circle cx="13.4" cy="8.4" r="3.1" fill="#fff"/><circle cx="6.8" cy="8.5" r="1.4" fill="#000"/><circle cx="13.2" cy="8.5" r="1.4" fill="#000"/><ellipse cx="10" cy="11.6" rx="1.6" ry="1.1" fill="#1a1a1a"/><rect x="9" y="12.4" width="2" height="2" fill="#f0e6dc"/><circle cx="0.9" cy="14.8" r="1.5" fill="#d9a883"/><circle cx="19.1" cy="14.8" r="1.5" fill="#d9a883"/><circle cx="3.3" cy="26.8" r="1.5" fill="#d9a883"/><circle cx="16.7" cy="26.8" r="1.5" fill="#d9a883"/></g><path d="M1542.7,133 L1557.7,148 M1557.7,133 L1542.7,148" stroke="#6e7072" stroke-width="2"/><g transform="translate(1594,125.7)"><circle cx="1.8" cy="4.6" r="2.3" fill="#75b8e3"/><circle cx="18.2" cy="4.6" r="2.3" fill="#75b8e3"/><path d="M1.2,11 Q1.2,1.2 10,1.2 Q18.8,1.2 18.8,11 V21 Q18.8,28.4 10,28.4 Q1.2,28.4 1.2,21 Z" fill="#75b8e3"/><circle cx="6.6" cy="8.4" r="3.1" fill="#fff"/><circle cx="13.4" cy="8.4" r="3.1" fill="#fff"/><circle cx="6.8" cy="8.5" r="1.4" fill="#000"/><circle cx="13.2" cy="8.5" r="1.4" fill="#000"/><ellipse cx="10" cy="11.6" rx="1.6" ry="1.1" fill="#1a1a1a"/><rect x="9" y="12.4" width="2" height="2" fill="#f0e6dc"/><circle cx="0.9" cy="14.8" r="1.5" fill="#d9a883"/><circle cx="19.1" cy="14.8" r="1.5" fill="#d9a883"/><circle cx="3.3" cy="26.8" r="1.5" fill="#d9a883"/><circle cx="16.7" cy="26.8" r="1.5" fill="#d9a883"/></g><path d="M1724.4,133 L1739.4,148 M1739.4,133 L1724.4,148" stroke="#6e7072" stroke-width="2"/><g transform="translate(1775.7,125.7)"><circle cx="1.8" cy="4.6" r="2.3" fill="#75b8e3"/><circle cx="18.2" cy="4.6" r="2.3" fill="#75b8e3"/><path d="M1.2,11 Q1.2,1.2 10,1.2 Q18.8,1.2 18.8,11 V21 Q18.8,28.4 10,28.4 Q1.2,28.4 1.2,21 Z" fill="#75b8e3"/><circle cx="6.6" cy="8.4" r="3.1" fill="#fff"/><circle cx="13.4" cy="8.4" r="3.1" fill="#fff"/><circle cx="6.8" cy="8.5" r="1.4" fill="#000"/><circle cx="13.2" cy="8.5" r="1.4" fill="#000"/><ellipse cx="10" cy="11.6" rx="1.6" ry="1.1" fill="#1a1a1a"/><rect x="9" y="12.4" width="2" height="2" fill="#f0e6dc"/><circle cx="0.9" cy="14.8" r="1.5" fill="#d9a883"/><circle cx="19.1" cy="14.8" r="1.5" fill="#d9a883"/><circle cx="3.3" cy="26.8" r="1.5" fill="#d9a883"/><circle cx="16.7" cy="26.8" r="1.5" fill="#d9a883"/></g><path d="M1950.3,133 L1965.3,148 M1965.3,133 L1950.3,148" stroke="#6e7072" stroke-width="2"/><path d="M2166.8,133 L2181.8,148 M2181.8,133 L2166.8,148" stroke="#6e7072" stroke-width="2"/><g transform="translate(2217.7,125.7)"><circle cx="1.8" cy="4.6" r="2.3" fill="#75b8e3"/><circle cx="18.2" cy="4.6" r="2.3" fill="#75b8e3"/><path d="M1.2,11 Q1.2,1.2 10,1.2 Q18.8,1.2 18.8,11 V21 Q18.8,28.4 10,28.4 Q1.2,28.4 1.2,21 Z" fill="#75b8e3"/><circle cx="6.6" cy="8.4" r="3.1" fill="#fff"/><circle cx="13.4" cy="8.4" r="3.1" fill="#fff"/><circle cx="6.8" cy="8.5" r="1.4" fill="#000"/><circle cx="13.2" cy="8.5" r="1.4" fill="#000"/><ellipse cx="10" cy="11.6" rx="1.6" ry="1.1" fill="#1a1a1a"/><rect x="9" y="12.4" width="2" height="2" fill="#f0e6dc"/><circle cx="0.9" cy="14.8" r="1.5" fill="#d9a883"/><circle cx="19.1" cy="14.8" r="1.5" fill="#d9a883"/><circle cx="3.3" cy="26.8" r="1.5" fill="#d9a883"/><circle cx="16.7" cy="26.8" r="1.5" fill="#d9a883"/></g><path d="M2410.0,133 L2425.0,148 M2425.0,133 L2410.0,148" stroke="#6e7072" stroke-width="2"/><g transform="translate(2461.6,125.7)"><circle cx="1.8" cy="4.6" r="2.3" fill="#75b8e3"/><circle cx="18.2" cy="4.6" r="2.3" fill="#75b8e3"/><path d="M1.2,11 Q1.2,1.2 10,1.2 Q18.8,1.2 18.8,11 V21 Q18.8,28.4 10,28.4 Q1.2,28.4 1.2,21 Z" fill="#75b8e3"/><circle cx="6.6" cy="8.4" r="3.1" fill="#fff"/><circle cx="13.4" cy="8.4" r="3.1" fill="#fff"/><circle cx="6.8" cy="8.5" r="1.4" fill="#000"/><circle cx="13.2" cy="8.5" r="1.4" fill="#000"/><ellipse cx="10" cy="11.6" rx="1.6" ry="1.1" fill="#1a1a1a"/><rect x="9" y="12.4" width="2" height="2" fill="#f0e6dc"/><circle cx="0.9" cy="14.8" r="1.5" fill="#d9a883"/><circle cx="19.1" cy="14.8" r="1.5" fill="#d9a883"/><circle cx="3.3" cy="26.8" r="1.5" fill="#d9a883"/><circle cx="16.7" cy="26.8" r="1.5" fill="#d9a883"/></g><path d="M2618.6,133 L2633.6,148 M2633.6,133 L2618.6,148" stroke="#6e7072" stroke-width="2"/><g transform="translate(2670,125.7)"><circle cx="1.8" cy="4.6" r="2.3" fill="#75b8e3"/><circle cx="18.2" cy="4.6" r="2.3" fill="#75b8e3"/><path d="M1.2,11 Q1.2,1.2 10,1.2 Q18.8,1.2 18.8,11 V21 Q18.8,28.4 10,28.4 Q1.2,28.4 1.2,21 Z" fill="#75b8e3"/><circle cx="6.6" cy="8.4" r="3.1" fill="#fff"/><circle cx="13.4" cy="8.4" r="3.1" fill="#fff"/><circle cx="6.8" cy="8.5" r="1.4" fill="#000"/><circle cx="13.2" cy="8.5" r="1.4" fill="#000"/><ellipse cx="10" cy="11.6" rx="1.6" ry="1.1" fill="#1a1a1a"/><rect x="9" y="12.4" width="2" height="2" fill="#f0e6dc"/><circle cx="0.9" cy="14.8" r="1.5" fill="#d9a883"/><circle cx="19.1" cy="14.8" r="1.5" fill="#d9a883"/><circle cx="3.3" cy="26.8" r="1.5" fill="#d9a883"/><circle cx="16.7" cy="26.8" r="1.5" fill="#d9a883"/></g><path d="M2873.8,133 L2888.8,148 M2888.8,133 L2873.8,148" stroke="#6e7072" stroke-width="2"/><circle cx="2012" cy="140" r="16" fill="#62c7c4"/><path d="M2005.6,147.3 L2012.3,131 L2018.6,147.3 L2009.8,140.4" fill="none" stroke="#fff" stroke-width="2.2"/><circle cx="3006" cy="130" r="3" fill="#afb1b3"/><circle cx="3006" cy="140" r="3" fill="#afb1b3"/><circle cx="3006" cy="150" r="3" fill="#afb1b3"/></svg>
<div class="a" style="left:876px;top:272px;width:54px;height:52px;background:#3b3b3b"></div>
<div class="a" style="left:882px;top:304px;width:6px;height:6px;border-radius:3px;background:#9a9da0"></div>
<div class="a" style="left:900px;top:304px;width:6px;height:6px;border-radius:3px;background:#9a9da0"></div>
<div class="a" style="left:918px;top:304px;width:6px;height:6px;border-radius:3px;background:#9a9da0"></div>
<div class="a" style="left:816px;top:1208px;width:2px;height:52px;background:#393939"></div>
<div class="a" style="left:816px;top:1364px;width:2px;height:52px;background:#393939"></div>
<div class="a" style="left:3008px;top:224px;width:16px;height:318px;border-radius:8px;background:#4b4b4b"></div>
<div class="a" style="left:588px;top:948px;width:148px;height:52px;background:#35383b"></div>
<div class="a" style="left:737px;top:948px;width:2293px;height:52px;background:#323232"></div>
<div class="a" style="left:735px;top:168px;width:2px;height:1454px;background:#4b4d4f"></div>
<div class="a" style="left:2910px;top:168px;width:2px;height:1454px;background:#3f4143"></div>
<div class="ln" style="top:172px;color:#606366">1</div>
<div class="cl" style="top:172px"><span class="k">package</span> <span class="p">user</span></div>
<div class="ln" style="top:224px;color:#606366">2</div>
<div class="ln" style="top:276px;color:#606366">3</div>
<div class="cl" style="top:276px"><span class="k">import</span> </div>
<div class="ln" style="top:328px;color:#606366">14</div>
<div class="ln" style="top:380px;color:#606366">15</div>
<div class="cl" style="top:380px"><span class="k">type</span> (</div>
<div class="ln" style="top:432px;color:#606366">16</div>
<div class="cl" style="top:432px">    sUser <span class="k">struct</span>{}</div>
<div class="ln" style="top:484px;color:#606366">17</div>
<div class="cl" style="top:484px">)</div>
<div class="ln" style="top:536px;color:#606366">18</div>
<div class="ln" style="top:588px;color:#606366">19</div>
<div class="cl" style="top:588px"><span class="k">func</span> <span class="f">init</span>() {</div>
<div class="ln" style="top:640px;color:#606366">20</div>
<div class="cl" style="top:640px">    <span class="p">service</span>.<span class="c">RegisterUser</span>(<span class="c">New</span>())</div>
<div class="ln" style="top:692px;color:#606366">21</div>
<div class="cl" style="top:692px">}</div>
<div class="ln" style="top:744px;color:#606366">22</div>
<div class="ln" style="top:796px;color:#606366">23</div>
<div class="cl" style="top:796px"><span class="k">func</span> <span class="f">New</span>() *<span class="t">sUser</span> {</div>
<div class="ln" style="top:848px;color:#606366">24</div>
<div class="cl" style="top:848px">    <span class="k">return</span> &amp;<span class="t">sUser</span>{}</div>
<div class="ln" style="top:900px;color:#606366">25</div>
<div class="cl" style="top:900px">}</div>
<div class="ln" style="top:952px;color:#a4a3a3">26</div>
<div class="ln" style="top:1004px;color:#606366">27</div>
<div class="cl" style="top:1004px"><span class="cm">// </span><span class="dr">Create</span><span class="cm"> creates user account.</span></div>
<div class="ln" style="top:1056px;color:#606366">28</div>
<div class="cl" style="top:1056px"><span class="k">func</span> (<span class="r">s</span> *<span class="t">sUser</span>) <span class="f">Create</span>(ctx <span class="p">context</span>.<span class="t">Context</span><span class="k">,</span> in <span class="p">model</span>.<span class="t">UserCreateInput</span>) (err <span class="k">error</span>) {</div>
<div class="ln" style="top:1108px;color:#606366">29</div>
<div class="cl" style="top:1108px">    <span class="cm">// If Nickname is not specified, it then uses Passport as its default Nickname.</span></div>
<div class="ln" style="top:1160px;color:#606366">30</div>
<div class="cl" style="top:1160px">    <span class="k">if</span> in.Nickname == <span class="s">&quot;&quot;</span> {</div>
<div class="ln" style="top:1212px;color:#606366">31</div>
<div class="cl" style="top:1212px">        in.Nickname = in.Passport</div>
<div class="ln" style="top:1264px;color:#606366">32</div>
<div class="cl" style="top:1264px">    }</div>
<div class="ln" style="top:1316px;color:#606366">33</div>
<div class="cl" style="top:1316px">    <span class="k">var</span> (</div>
<div class="ln" style="top:1368px;color:#606366">34</div>
<div class="cl" style="top:1368px">        available <span class="k">bool</span></div>
<div class="ln" style="top:1420px;color:#606366">35</div>
<div class="cl" style="top:1420px">    )</div>
<div class="ln" style="top:1472px;color:#606366">36</div>
<div class="cl" style="top:1472px">    <span class="cm">// Passport checks.</span></div>
<div class="ln" style="top:1524px;color:#606366">37</div>
<div class="cl" style="top:1524px">    available<span class="k">,</span> err = <span class="r">s</span>.<span class="c">IsPassportAvailable</span>(ctx<span class="k">,</span> in.Passport)</div>
<div class="ln" style="top:1576px;color:#606366">38</div>
<div class="cl" style="top:1576px">    <span class="k">if</span> err != <span class="k">nil</span> {</div>
<svg class="a" style="left:0;top:0" width="3072" height="1750"><path d="M726.1,602.0 H745.9 V618.0 L736,627.6 L726.1,618.0 Z" fill="#2e2f30" stroke="#606264" stroke-width="1.9"/><path d="M730.2,612.0 H741.8" stroke="#606264" stroke-width="2"/><path d="M726.1,810.0 H745.9 V826.0 L736,835.6 L726.1,826.0 Z" fill="#2e2f30" stroke="#606264" stroke-width="1.9"/><path d="M730.2,820.0 H741.8" stroke="#606264" stroke-width="2"/><path d="M726.1,1070.0 H745.9 V1086.0 L736,1095.6 L726.1,1086.0 Z" fill="#2e2f30" stroke="#606264" stroke-width="1.9"/><path d="M730.2,1080.0 H741.8" stroke="#606264" stroke-width="2"/><path d="M726.1,1174.0 H745.9 V1190.0 L736,1199.6 L726.1,1190.0 Z" fill="#2e2f30" stroke="#606264" stroke-width="1.9"/><path d="M730.2,1184.0 H741.8" stroke="#606264" stroke-width="2"/><path d="M726.1,1590.0 H745.9 V1606.0 L736,1615.6 L726.1,1606.0 Z" fill="#2e2f30" stroke="#606264" stroke-width="1.9"/><path d="M730.2,1600.0 H741.8" stroke="#606264" stroke-width="2"/><path d="M736,700.0 L745.9,709.5 V726.0 H726.1 V709.5 Z" fill="#2e2f30" stroke="#606264" stroke-width="1.9"/><path d="M730.2,715.8 H741.8" stroke="#606264" stroke-width="2"/><path d="M736,908.0 L745.9,917.5 V934.0 H726.1 V917.5 Z" fill="#2e2f30" stroke="#606264" stroke-width="1.9"/><path d="M730.2,923.8 H741.8" stroke="#606264" stroke-width="2"/><path d="M736,1272.0 L745.9,1281.5 V1298.0 H726.1 V1281.5 Z" fill="#2e2f30" stroke="#606264" stroke-width="1.9"/><path d="M730.2,1287.8 H741.8" stroke="#606264" stroke-width="2"/><rect x="726.1" y="290.1" width="19.8" height="19.6" fill="#2e2f30" stroke="#606264" stroke-width="1.9"/><path d="M730.2,299.9 H741.8 M736,294.0 V305.8" stroke="#606264" stroke-width="2"/><circle cx="681" cy="452" r="11" fill="#568f3e"/><path d="M678,446.8 H684 M681,446.8 V457.2 M678,457.2 H684" stroke="#22361b" stroke-width="1.8"/><path d="M695.5,443 V469" stroke="#c75450" stroke-width="3"/><path d="M689,444 L695.5,435 L702.2,444 Z" fill="#c75450"/><circle cx="681" cy="1076" r="11" fill="#568f3e"/><path d="M678,1070.8 H684 M681,1070.8 V1081.2 M678,1081.2 H684" stroke="#22361b" stroke-width="1.8"/><path d="M695.5,1067 V1093" stroke="#c75450" stroke-width="3"/><path d="M689,1068 L695.5,1059 L702.2,1068 Z" fill="#c75450"/><rect x="685" y="565.5" width="646.6" height="178.5" rx="7" ry="7" fill="none" stroke="#e63b2a" stroke-width="6"/><path d="M1564.3,520.7 Q1571,521 1570.8,526.1 Q1570.5,529.5 1567.5,530.5 L1402.1,579.3 L1411.5,595.4 L1354,576 L1397,533.6 L1395.4,551.9 Z" fill="#e8311f"/><path d="M2994,192 L3001,199 L3014,186" fill="none" stroke="#499c54" stroke-width="5"/></svg>
<div class="ui" style="left:3063.4px;top:169.0px;font-size:22px;line-height:24.57px;height:24.57px;transform-origin:0 0;transform:rotate(90deg);color:#bbbbbb">Database</div>
<div class="ui" style="left:3063.4px;top:1126.0px;font-size:22px;line-height:24.57px;height:24.57px;transform-origin:0 0;transform:rotate(90deg);color:#bbbbbb">API Security Audit</div>
<div class="ui" style="left:3063.4px;top:1387.0px;font-size:22px;line-height:24.57px;height:24.57px;transform-origin:0 0;transform:rotate(90deg);color:#bbbbbb">make</div>
<div class="ui" style="left:3065.2px;top:1514.0px;font-size:24px;line-height:26.81px;height:26.81px;transform-origin:0 0;transform:rotate(90deg);color:#bbbbbb">Notifications</div><svg class="a" style="left:0;top:0" width="3072" height="1666"><g fill="#afb1b3"><ellipse cx="3051" cy="137.8" rx="11" ry="4"/><path d="M3040,140.2 Q3051,146 3062,140.2 V143.5 Q3051,149.5 3040,143.5 Z"/><path d="M3040,145.8 Q3051,151.5 3062,145.8 V149 Q3051,155 3040,149 Z"/><path d="M3040,151.2 Q3051,157 3062,151.2 V154.5 Q3051,160.5 3040,154.5 Z"/></g><g transform="translate(3038.5,1092)"><rect x="0" y="0" width="25.7" height="25.6" rx="2.5" fill="#000"/><rect x="2" y="5.8" width="21.7" height="17.7" fill="#3c3f41"/><rect x="16.5" y="2.4" width="1.5" height="1.4" fill="#3a3a3a"/><rect x="19" y="2.4" width="1.5" height="1.4" fill="#3a3a3a"/><rect x="21.5" y="2.4" width="1.5" height="1.4" fill="#3a3a3a"/><path d="M4.5,21.3 L8.3,9.3" stroke="#000" stroke-width="1.8"/><text x="8.3" y="19.8" font-family="Liberation Sans" font-weight="bold" font-size="11.5" fill="#000" textLength="13.5" lengthAdjust="spacingAndGlyphs">API</text></g><path d="M3042,1373 V1355 H3046 L3051,1364 L3056,1355 H3060 V1373 H3056 V1362 L3051,1370 L3046,1362 V1373 Z" fill="#afb1b3"/><path d="M3039.6,1502.5 L3043,1498 V1493 Q3043,1484 3051,1484 Q3059,1484 3059,1493 V1498 L3062.4,1502.5 Z" fill="#afb1b3"/><path d="M3047,1505 H3055 Q3055,1508 3051,1508 Q3047,1508 3047,1505 Z" fill="#afb1b3"/><circle cx="3058.9" cy="1487" r="5.3" fill="#d9534f"/></svg>
<div class="ui" style="left:92.3px;top:1674.2px;font-size:22.5px;line-height:30px;color:#bbbbbb">Git</div>
<div class="ui" style="left:194.7px;top:1674.2px;font-size:22.5px;line-height:30px;color:#777777">Find</div>
<div class="ui" style="left:308.3px;top:1674.2px;font-size:22.5px;line-height:30px;color:#bbbbbb">Run</div>
<div class="ui" style="left:419.4px;top:1674.2px;font-size:22.5px;line-height:30px;color:#bbbbbb">TODO</div>
<div class="ui" style="left:554.6px;top:1674.2px;font-size:22.5px;line-height:30px;color:#bbbbbb">Problems</div>
<div class="ui" style="left:726.8px;top:1674.2px;font-size:22.5px;line-height:30px;color:#bbbbbb">Terminal</div>
<div class="ui" style="left:2852.7px;top:1674.2px;font-size:22.5px;line-height:30px;color:#bbbbbb">Audit Problems</div>
<div class="ui" style="left:62.6px;top:1715.1px;font-size:22.85px;line-height:30px;color:#bbbbbb">Compilation failed (32 minutes ago)</div>
<div class="ui" style="left:2538.8px;top:1715.7px;font-size:22.5px;line-height:30px;color:#bbbbbb">26:1</div>
<div class="ui" style="left:2604.5px;top:1715.7px;font-size:22.5px;line-height:30px;color:#bbbbbb">LF</div>
<div class="ui" style="left:2652.7px;top:1715.7px;font-size:22.5px;line-height:30px;color:#bbbbbb">UTF-8</div>
<div class="ui" style="left:2742.7px;top:1715.7px;font-size:22.5px;line-height:30px;color:#bbbbbb">Tab</div>
<div class="ui" style="left:2837.0px;top:1715.7px;font-size:22.5px;line-height:30px;color:#bbbbbb">master</div><svg class="a" style="left:0;top:1660px" width="3072" height="90" viewBox="0 1660 3072 90"><g fill="none" stroke="#afb1b3" stroke-width="3"><path d="M65,1680 V1698"/><path d="M65,1694 Q76,1690 76,1682"/></g><circle cx="65" cy="1680" r="3.5" fill="#afb1b3"/><circle cx="76" cy="1682" r="3.5" fill="#afb1b3"/><circle cx="65" cy="1698" r="3.5" fill="#afb1b3"/><circle cx="171" cy="1685" r="7.5" fill="none" stroke="#5f6163" stroke-width="3"/><path d="M176,1690 L184,1698" stroke="#5f6163" stroke-width="3.5"/><path d="M278,1678 L294,1688 L278,1698 Z" fill="#afb1b3"/><g fill="#afb1b3"><rect x="388" y="1679" width="4" height="4"/><rect x="388" y="1686" width="4" height="4"/><rect x="388" y="1693" width="4" height="4"/><rect x="394" y="1679" width="15" height="4"/><rect x="394" y="1686" width="15" height="4"/><rect x="394" y="1693" width="15" height="4"/></g><circle cx="533" cy="1688" r="11" fill="#afb1b3"/><rect x="531.5" y="1681" width="3" height="8" fill="#3c3f41"/><rect x="531.5" y="1691" width="3" height="3" fill="#3c3f41"/><rect x="694" y="1678" width="22" height="21" fill="#afb1b3"/><path d="M698,1683 L703,1687 L698,1691" fill="none" stroke="#3c3f41" stroke-width="2"/><rect x="704" y="1693" width="8" height="2" fill="#3c3f41"/><g transform="translate(2818,1676)"><rect x="0" y="0" width="25.7" height="25.6" rx="2.5" fill="#000"/><rect x="2" y="5.8" width="21.7" height="17.7" fill="#3c3f41"/><rect x="16.5" y="2.4" width="1.5" height="1.4" fill="#3a3a3a"/><rect x="19" y="2.4" width="1.5" height="1.4" fill="#3a3a3a"/><rect x="21.5" y="2.4" width="1.5" height="1.4" fill="#3a3a3a"/><path d="M4.5,21.3 L8.3,9.3" stroke="#000" stroke-width="1.8"/><text x="8.3" y="19.8" font-family="Liberation Sans" font-weight="bold" font-size="11.5" fill="#000" textLength="13.5" lengthAdjust="spacingAndGlyphs">API</text></g><rect x="16" y="1718" width="20" height="20" fill="none" stroke="#afb1b3" stroke-width="2.2"/><path d="M13,1722 V1742 H32" fill="none" stroke="#afb1b3" stroke-width="2.2"/><g fill="none" stroke="#afb1b3" stroke-width="3"><path d="M2809,1719 V1742"/><path d="M2809,1738 Q2822,1735 2822,1722"/></g><circle cx="2809" cy="1719" r="3.5" fill="#afb1b3"/><circle cx="2822" cy="1721" r="3.5" fill="#afb1b3"/><circle cx="2809" cy="1742" r="3.5" fill="#afb1b3"/><rect x="2932" y="1729" width="16" height="12" fill="#afb1b3"/><path d="M2928,1729 V1724 Q2928,1719 2933,1719 Q2937,1719 2937,1724 V1729" fill="none" stroke="#afb1b3" stroke-width="3"/><path d="M2977,1735.5 Q2972,1735.5 2972,1730 Q2972,1724.5 2977.5,1724 Q2979,1716 2987.5,1716 Q2995.5,1716 2997,1724 Q3002,1725 3002,1730.5 L2999,1733 Q2993,1730 2990.5,1735.5 Z" fill="#afb1b3"/><text x="2983" y="1732" font-family="Liberation Sans" font-weight="bold" font-size="15" fill="#3c3f41">?</text><circle cx="2996.8" cy="1738.7" r="7.8" fill="#3c3f41"/><rect x="2995.5" y="1731.8" width="2.6" height="3" fill="#afb1b3" transform="rotate(0 2996.8 1738.7)"/><rect x="2995.3" y="1730.5" width="3" height="4" fill="#afb1b3" transform="rotate(45 2996.8 1738.7)"/><rect x="2995.3" y="1730.5" width="3" height="4" fill="#afb1b3" transform="rotate(90 2996.8 1738.7)"/><rect x="2995.3" y="1730.5" width="3" height="4" fill="#afb1b3" transform="rotate(135 2996.8 1738.7)"/><rect x="2995.3" y="1730.5" width="3" height="4" fill="#afb1b3" transform="rotate(180 2996.8 1738.7)"/><rect x="2995.3" y="1730.5" width="3" height="4" fill="#afb1b3" transform="rotate(225 2996.8 1738.7)"/><rect x="2995.3" y="1730.5" width="3" height="4" fill="#afb1b3" transform="rotate(270 2996.8 1738.7)"/><rect x="2995.3" y="1730.5" width="3" height="4" fill="#afb1b3" transform="rotate(315 2996.8 1738.7)"/><circle cx="2996.8" cy="1738.7" r="5.2" fill="#afb1b3"/><circle cx="2996.8" cy="1738.7" r="2.2" fill="#3c3f41"/><circle cx="3036" cy="1730" r="12.2" fill="#c9524e"/><rect x="3034.4" y="1722.2" width="3.2" height="8.6" fill="#3c3f41"/><rect x="3034.4" y="1733.4" width="3.2" height="3.4" fill="#3c3f41"/></svg>
</div>
<div id="frame"></div>
</body></html>
